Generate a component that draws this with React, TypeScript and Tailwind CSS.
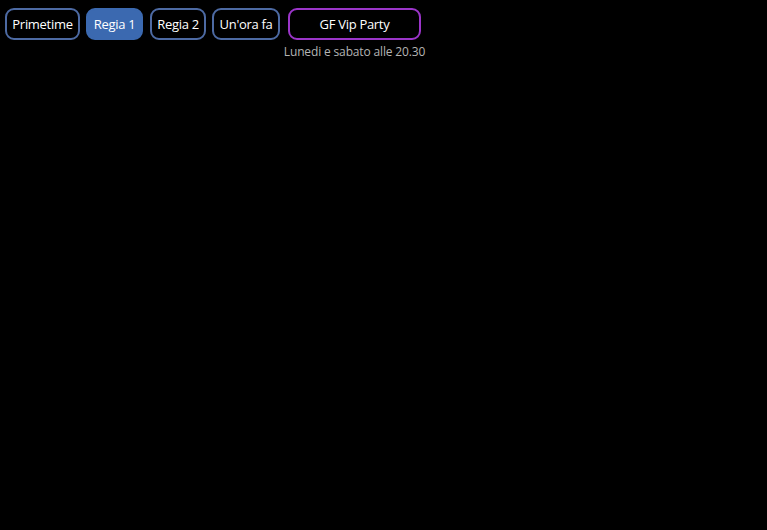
export default function App() {
  const base =
    "h-8 rounded-[9px] border-2 text-[13px] tracking-[-0.3px] leading-none text-white flex items-center justify-center";
  return (
    <div
      className="min-h-[530px] w-full bg-black"
      style={{ fontFamily: '"Open Sans", sans-serif' }}
    >
      <div className="flex items-start pl-[5px] pt-2">
        <button className={`${base} w-[75px] border-[#4d6aa3] bg-black`}>Primetime</button>
        <button className={`${base} ml-[6px] w-[57px] border-[#3b69b0] bg-[#3b69b0]`}>Regia 1</button>
        <button className={`${base} ml-[7px] w-[56px] border-[#4d6aa3] bg-black`}>Regia 2</button>
        <button className={`${base} ml-[6px] w-[68px] border-[#4d6aa3] bg-black`}>Un'ora fa</button>
        <div className="ml-1 flex w-[141px] flex-col items-center">
          <button className={`${base} w-[133px] border-[#9b35c9] bg-black`}>GF Vip Party</button>
          <div className="mt-[6px] whitespace-nowrap text-[12px] leading-none tracking-[-0.15px] text-[#b4b4b4]">
            Lunedi e sabato alle 20.30
          </div>
        </div>
      </div>
    </div>
  );
}
